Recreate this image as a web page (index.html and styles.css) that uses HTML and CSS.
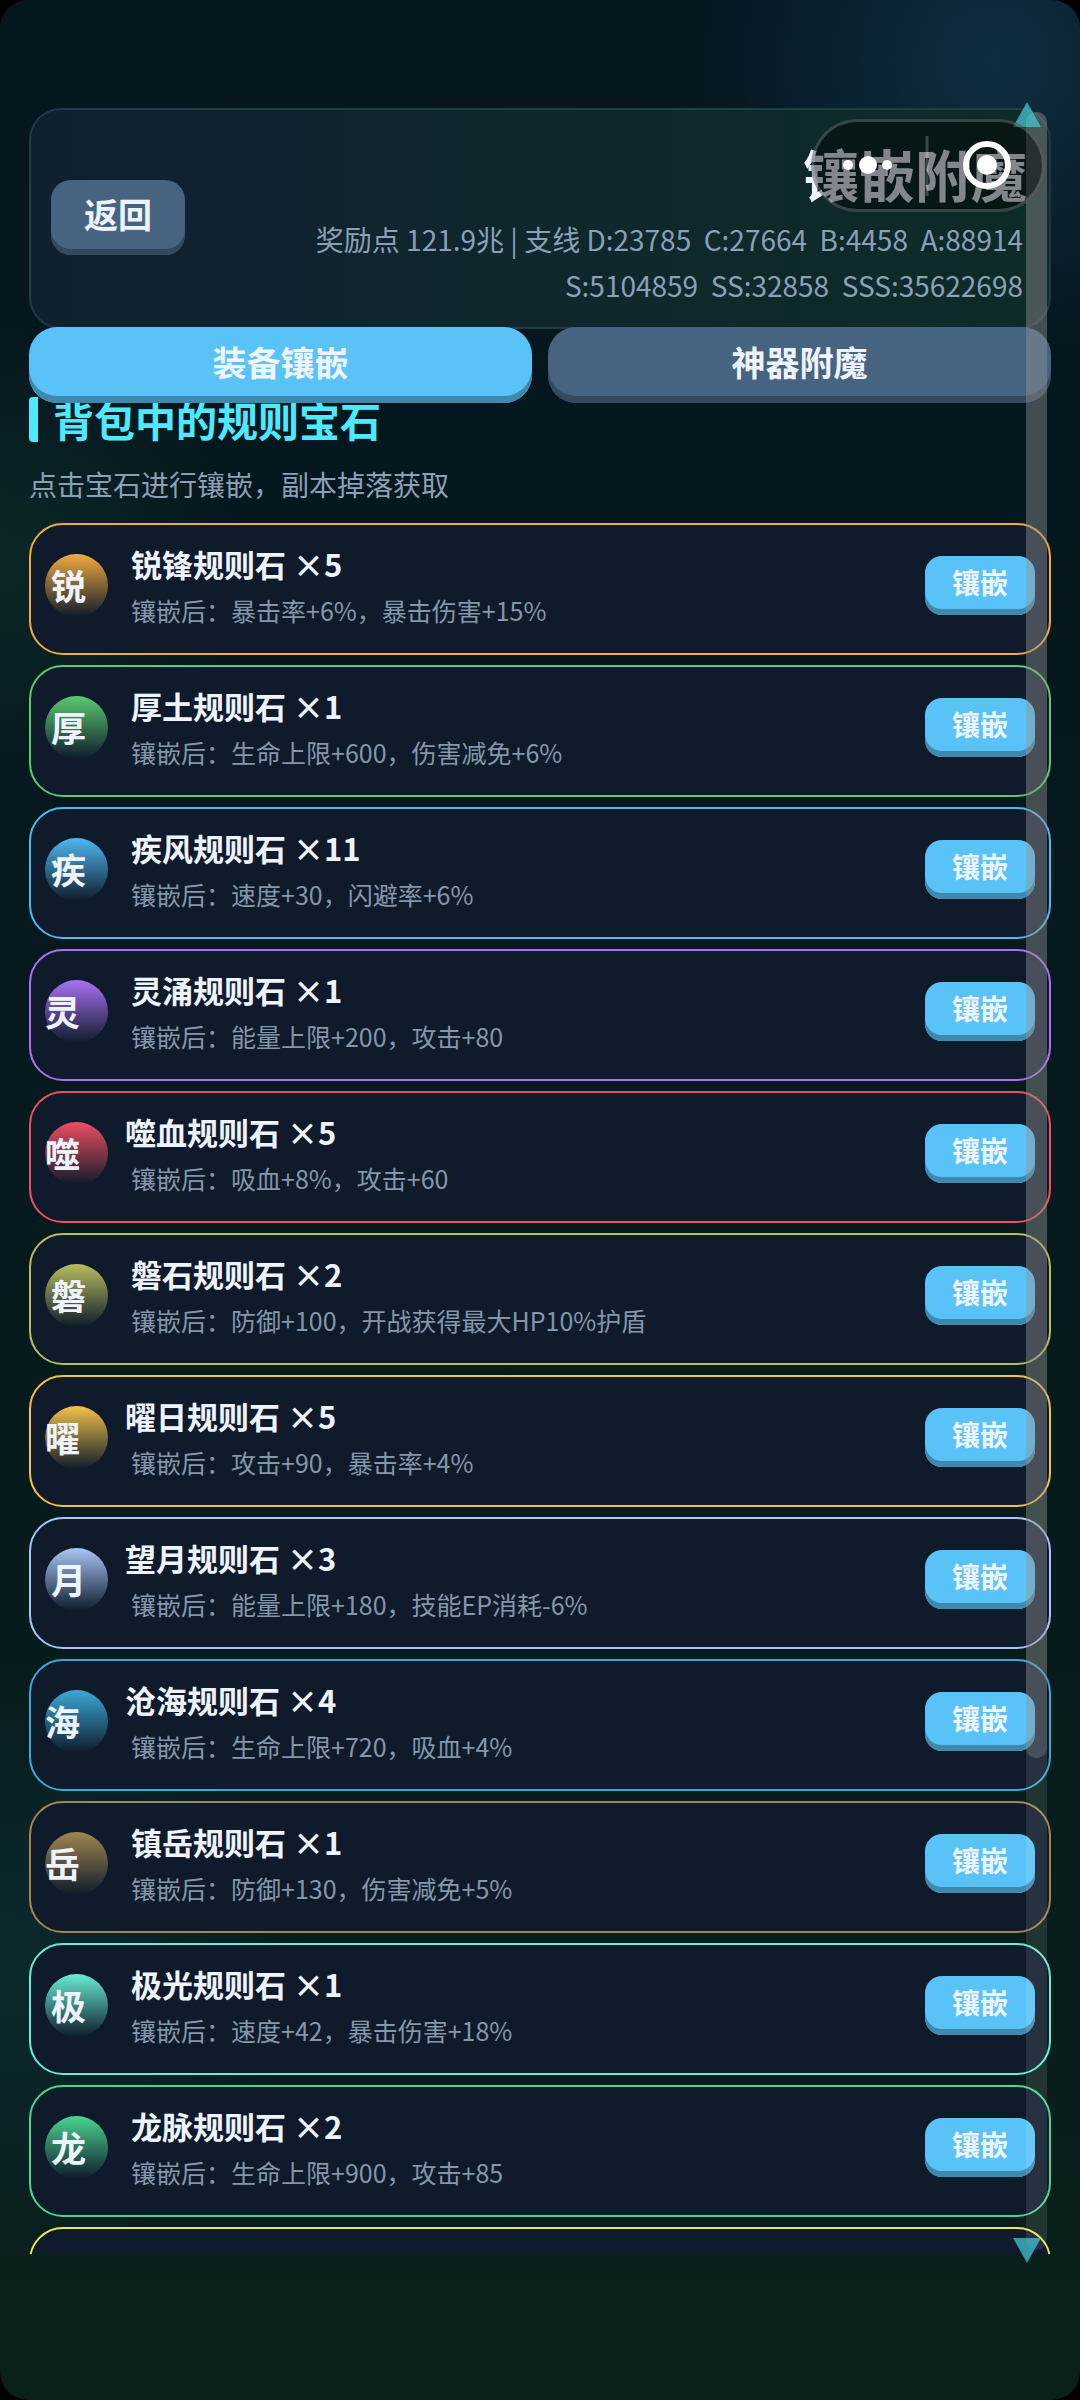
FILE: index.html
```html
<!DOCTYPE html>
<html lang="zh-CN">
<head>
    <meta charset="UTF-8">
    <meta name="viewport" content="width=device-width, initial-scale=1.0">
    <title>镶嵌附魔</title>
    <link rel="stylesheet" href="styles.css">
</head>
<body>
    <div class="app">
        <div class="screen">
            <header class="header">
                <button class="btn btn-back" type="button">返回</button>
                <div class="header-info">
                    <h1>镶嵌附魔</h1>
                    <p class="stats">奖励点 121.9兆 | 支线 D:23785&nbsp; C:27664&nbsp; B:4458&nbsp; A:88914 S:5104859&nbsp; SS:32858&nbsp; SSS:35622698</p>
                </div>
            </header>

            <nav class="tabs">
                <button class="btn tab active" type="button">装备镶嵌</button>
                <button class="btn tab" type="button">神器附魔</button>
            </nav>

            <h2 class="section-title">背包中的规则宝石</h2>
            <p class="hint">点击宝石进行镶嵌，副本掉落获取</p>

            <div class="gem-list">
                <div class="gem-card gem-rui">
                    <span class="gem-icon">锐</span>
                    <div class="gem-info">
                        <h3>锐锋规则石 ×5</h3>
                        <p>镶嵌后：暴击率+6%，暴击伤害+15%</p>
                    </div>
                    <button class="btn btn-inlay" type="button">镶嵌</button>
                </div>
                <div class="gem-card gem-hou">
                    <span class="gem-icon">厚</span>
                    <div class="gem-info">
                        <h3>厚土规则石 ×1</h3>
                        <p>镶嵌后：生命上限+600，伤害减免+6%</p>
                    </div>
                    <button class="btn btn-inlay" type="button">镶嵌</button>
                </div>
                <div class="gem-card gem-ji">
                    <span class="gem-icon">疾</span>
                    <div class="gem-info">
                        <h3>疾风规则石 ×11</h3>
                        <p>镶嵌后：速度+30，闪避率+6%</p>
                    </div>
                    <button class="btn btn-inlay" type="button">镶嵌</button>
                </div>
                <div class="gem-card gem-ling">
                    <span class="gem-icon flush">灵</span>
                    <div class="gem-info">
                        <h3>灵涌规则石 ×1</h3>
                        <p>镶嵌后：能量上限+200，攻击+80</p>
                    </div>
                    <button class="btn btn-inlay" type="button">镶嵌</button>
                </div>
                <div class="gem-card gem-shi">
                    <span class="gem-icon flush">噬</span>
                    <div class="gem-info">
                        <h3 class="flush">噬血规则石 ×5</h3>
                        <p>镶嵌后：吸血+8%，攻击+60</p>
                    </div>
                    <button class="btn btn-inlay" type="button">镶嵌</button>
                </div>
                <div class="gem-card gem-pan">
                    <span class="gem-icon">磐</span>
                    <div class="gem-info">
                        <h3>磐石规则石 ×2</h3>
                        <p>镶嵌后：防御+100，开战获得最大HP10%护盾</p>
                    </div>
                    <button class="btn btn-inlay" type="button">镶嵌</button>
                </div>
                <div class="gem-card gem-yao">
                    <span class="gem-icon flush">曜</span>
                    <div class="gem-info">
                        <h3 class="flush">曜日规则石 ×5</h3>
                        <p>镶嵌后：攻击+90，暴击率+4%</p>
                    </div>
                    <button class="btn btn-inlay" type="button">镶嵌</button>
                </div>
                <div class="gem-card gem-yue">
                    <span class="gem-icon">月</span>
                    <div class="gem-info">
                        <h3 class="flush">望月规则石 ×3</h3>
                        <p>镶嵌后：能量上限+180，技能EP消耗-6%</p>
                    </div>
                    <button class="btn btn-inlay" type="button">镶嵌</button>
                </div>
                <div class="gem-card gem-hai">
                    <span class="gem-icon flush">海</span>
                    <div class="gem-info">
                        <h3 class="flush">沧海规则石 ×4</h3>
                        <p>镶嵌后：生命上限+720，吸血+4%</p>
                    </div>
                    <button class="btn btn-inlay" type="button">镶嵌</button>
                </div>
                <div class="gem-card gem-zhen">
                    <span class="gem-icon flush">岳</span>
                    <div class="gem-info">
                        <h3>镇岳规则石 ×1</h3>
                        <p>镶嵌后：防御+130，伤害减免+5%</p>
                    </div>
                    <button class="btn btn-inlay" type="button">镶嵌</button>
                </div>
                <div class="gem-card gem-guang">
                    <span class="gem-icon">极</span>
                    <div class="gem-info">
                        <h3>极光规则石 ×1</h3>
                        <p>镶嵌后：速度+42，暴击伤害+18%</p>
                    </div>
                    <button class="btn btn-inlay" type="button">镶嵌</button>
                </div>
                <div class="gem-card gem-long">
                    <span class="gem-icon">龙</span>
                    <div class="gem-info">
                        <h3>龙脉规则石 ×2</h3>
                        <p>镶嵌后：生命上限+900，攻击+85</p>
                    </div>
                    <button class="btn btn-inlay" type="button">镶嵌</button>
                </div>
                <div class="gem-card gem-next"></div>
            </div>

            <div class="scroll-track">
                <div class="scroll-thumb"></div>
            </div>
            <div class="arrow arrow-up"></div>
            <div class="arrow arrow-down"></div>
        </div>

        <div class="capsule">
            <svg viewBox="0 0 234 93" aria-hidden="true">
                <circle cx="37" cy="46" r="5" fill="#fff"/>
                <circle cx="57" cy="46" r="9" fill="#fff"/>
                <circle cx="76" cy="46" r="5" fill="#fff"/>
                <path d="M116 17V77" stroke="#fff" stroke-opacity=".22" stroke-width="3"/>
                <circle cx="176" cy="46" r="21" fill="none" stroke="#fff" stroke-width="6"/>
                <circle cx="176" cy="46" r="10" fill="#fff"/>
            </svg>
        </div>
    </div>
</body>
</html>
```

FILE: styles.css
```css
:root {
    --text: #eef4ff;
    --muted: #8ba0b5;
    --blue: #59c3f7;
    --blue-dark: #4089ae;
    --slate: #46637f;
    --slate-dark: #34495c;
    --cyan: #4deaff;
}

* {
    box-sizing: border-box;
    margin: 0;
    padding: 0;
}

body {
    background: #000;
    color: var(--text);
    font-family: "Noto Sans CJK SC", "Noto Sans", sans-serif;
}

.app {
    position: relative;
    height: 100vh;
    padding: 108px 29px 146px;
    border-radius: 28px;
    background:
        radial-gradient(circle at 92% 60px, rgba(24, 64, 92, 0.55), transparent 300px),
        radial-gradient(circle at 0 560px, rgba(20, 62, 48, 0.42), transparent 240px),
        radial-gradient(circle at 0 1960px, rgba(16, 58, 72, 0.42), transparent 300px),
        linear-gradient(180deg, #05161f 0%, #06181e 30%, #071b1c 65%, #0a201c 100%);
}

.screen {
    position: relative;
    display: flex;
    flex-direction: column;
    height: 100%;
}

/* header */
.header {
    display: flex;
    align-items: center;
    justify-content: space-between;
    flex: none;
    height: 221px;
    padding: 0 22px 2px 20px;
    border: 2px solid rgba(90, 140, 150, 0.22);
    border-radius: 32px;
    background: linear-gradient(90deg, #102030, #10272d 50%, #0d2b29);
}

.header-info {
    width: 732px;
    padding-top: 8px;
    text-align: right;
}

h1 {
    font-size: 56px;
    line-height: 74px;
    padding-bottom: 6px;
}

.stats {
    padding-right: 4px;
    color: var(--muted);
    font-size: 28px;
    line-height: 46px;
}

.btn {
    border: none;
    color: var(--text);
    font-family: inherit;
    font-weight: bold;
    cursor: pointer;
}

.btn-back {
    width: 134px;
    height: 75px;
    padding-bottom: 8px;
    border-radius: 20px;
    background: var(--slate);
    box-shadow: inset 0 -6px var(--slate-dark);
    font-size: 34px;
}

/* tabs */
.tabs {
    position: relative;
    z-index: 1;
    display: flex;
    flex: none;
    gap: 16px;
    margin-top: -2px;
}

.tab {
    flex: 1;
    height: 76px;
    padding-bottom: 8px;
    border-radius: 28px;
    background: var(--slate);
    box-shadow: inset 0 -7px var(--slate-dark);
    font-size: 34px;
}

.tab.active {
    background: var(--blue);
    box-shadow: inset 0 -7px var(--blue-dark);
}

.section-title {
    flex: none;
    margin-top: -6px;
    padding-left: 15px;
    border-left: 9px solid var(--cyan);
    border-radius: 4px;
    color: var(--cyan);
    font-size: 41px;
    line-height: 45px;
}

.hint {
    flex: none;
    margin: 22px 0 19px;
    color: var(--muted);
    font-size: 28px;
    line-height: 40px;
}

/* gem list */
.gem-list {
    display: flex;
    flex: 1;
    flex-direction: column;
    gap: 10px;
    min-height: 0;
    overflow: hidden;
}

.gem-card {
    display: flex;
    align-items: center;
    flex: none;
    height: 132px;
    padding: 0 14px 8px;
    border: 2px solid var(--gem);
    border-radius: 34px;
    background: #0f1b2b;
}

.gem-icon {
    flex: none;
    width: 63px;
    height: 63px;
    padding-left: 6px;
    border-radius: 50%;
    background: linear-gradient(var(--gem), #0f1b2b);
    font-size: 35px;
    font-weight: bold;
    line-height: 61px;
}

.gem-icon.flush {
    padding-left: 0;
}

.gem-info {
    flex: 1;
    padding: 4px 0 0 23px;
}

.gem-info h3 {
    font-size: 31px;
    line-height: 47px;
}

.gem-info h3.flush {
    margin-left: -6px;
}

.gem-info p {
    color: #8496aa;
    font-size: 25px;
    line-height: 47px;
}

.btn-inlay {
    width: 110px;
    height: 59px;
    padding-bottom: 6px;
    border-radius: 17px;
    background: var(--blue);
    box-shadow: inset 0 -6px var(--blue-dark);
    font-size: 28px;
}

.gem-rui { --gem: #f2ab3f; }
.gem-hou { --gem: #5bc96f; }
.gem-ji { --gem: #4fb8f0; }
.gem-ling { --gem: #a871f5; }
.gem-shi { --gem: #ef4d63; }
.gem-pan { --gem: #b9bd5e; }
.gem-yao { --gem: #f3c24a; }
.gem-yue { --gem: #a9c6f5; }
.gem-hai { --gem: #3ba9d8; }
.gem-zhen { --gem: #a08650; }
.gem-guang { --gem: #69edd3; }
.gem-long { --gem: #4bd592; }
.gem-next { --gem: #ece65a; }

/* scrollbar */
.scroll-track {
    position: absolute;
    z-index: 2;
    top: 4px;
    right: 4px;
    bottom: 4px;
    width: 21px;
    border-radius: 10px;
    background: rgba(255, 255, 255, 0.1);
}

.scroll-thumb {
    height: 77%;
    border-radius: 10px;
    background: rgba(130, 130, 130, 0.37);
}

.arrow {
    position: absolute;
    z-index: 2;
    right: 10px;
    width: 28px;
    height: 25px;
    background: rgba(72, 205, 218, 0.7);
}

.arrow-up {
    top: -6px;
    clip-path: polygon(50% 0, 100% 100%, 0 100%);
}

.arrow-down {
    bottom: -9px;
    clip-path: polygon(0 0, 100% 0, 50% 100%);
}

.capsule {
    position: absolute;
    z-index: 3;
    top: 119px;
    right: 35px;
    width: 234px;
    height: 93px;
    border-radius: 47px;
    background: rgba(0, 0, 0, 0.45);
    box-shadow: inset 0 0 0 3px rgba(255, 255, 255, 0.2);
}

.capsule svg {
    display: block;
}
```
